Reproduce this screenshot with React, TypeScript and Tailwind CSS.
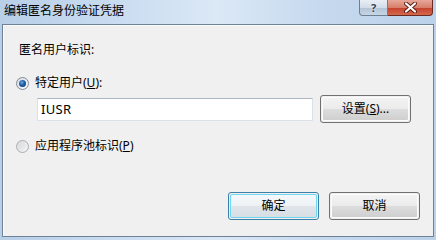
import React from "react";

const font = { fontFamily: '"Noto Sans", "Noto Sans CJK SC", sans-serif' };

function Radio({ checked }: { checked: boolean }) {
  return checked ? (
    <span className="flex h-[13px] w-[13px] shrink-0 items-center justify-center rounded-full border border-[#7f8b98] bg-gradient-to-br from-[#d5dbe2] to-[#fbfcfd]">
      <span className="h-[7px] w-[7px] rounded-full bg-[radial-gradient(circle_at_40%_35%,#6fa7dc_0%,#1c5ea8_45%,#0c3366_100%)]" />
    </span>
  ) : (
    <span className="flex h-[13px] w-[13px] shrink-0 items-center justify-center rounded-full border border-[#a9adb2] bg-gradient-to-br from-[#d8dadc] to-[#f7f7f7]">
      <span className="h-[7px] w-[7px] rounded-full bg-gradient-to-br from-[#dcdcdc] to-[#efefef]" />
    </span>
  );
}

function Btn({ children, def }: { children: React.ReactNode; def?: boolean }) {
  return def ? (
    <div className="flex h-[28px] w-[91px] items-center justify-center rounded-[3px] border border-[#3d7fa6] p-px">
      <div className="flex h-full w-full items-center justify-center rounded-[2px] border border-[#6fd7f2] bg-[linear-gradient(#f6f9fb_0%,#eef1f4_50%,#dfe5e9_51%,#d8dfe4_100%)] text-[12px] text-black">
        {children}
      </div>
    </div>
  ) : (
    <div className="flex h-[28px] w-[91px] items-center justify-center rounded-[3px] border border-[#707070] p-px">
      <div className="flex h-full w-full items-center justify-center rounded-[2px] border border-[#fcfcfc] bg-[linear-gradient(#f3f3f3_0%,#ebebeb_50%,#dddddd_51%,#cfcfcf_100%)] text-[12px] text-black">
        {children}
      </div>
    </div>
  );
}

export default function App() {
  return (
    <div
      className="flex h-[240px] w-[436px] flex-col overflow-hidden bg-[linear-gradient(90deg,#b8cfe8_0%,#c8dbf0_25%,#dbe8f6_50%,#c5d8ee_75%,#bcd2ea_100%)] text-black"
      style={font}
    >
      <div className="flex h-[24px] shrink-0 items-start">
        <div className="pl-[4px] pt-[3px] text-[12px] leading-[16px]">编辑匿名身份验证凭据</div>
        <div className="ml-auto mr-[3px] flex h-[16px]">
          <div className="flex h-[16px] w-[29px] items-center justify-center rounded-bl-[4px] border border-t-0 border-[#6f7f93] bg-[linear-gradient(#e9eef4_0%,#d3dde8_50%,#b4c3d4_51%,#c7d6e6_100%)] text-[11px] font-bold leading-[12px] text-[#2d3f55] [text-shadow:0_0_2px_#ffffff]">
            ?
          </div>
          <div className="flex h-[16px] w-[45px] items-center justify-center rounded-br-[4px] border border-l-0 border-t-0 border-[#6b2b22] bg-[linear-gradient(#e7a799_0%,#d77f6b_50%,#c5402a_51%,#d4684e_100%)]">
            <svg width="13" height="11" viewBox="0 0 13 11">
              <path d="M2 1.5 L11 9.5 M11 1.5 L2 9.5" stroke="#5a1d14" strokeWidth="4" strokeLinecap="round" />
              <path d="M2 1.5 L11 9.5 M11 1.5 L2 9.5" stroke="#ffffff" strokeWidth="2.2" strokeLinecap="round" />
            </svg>
          </div>
        </div>
      </div>
      <div className="mx-[2px] flex h-[213px] shrink-0 flex-col border border-[#6e8196] bg-[#f0f0f0]">
        <div className="flex flex-1 flex-col border-l border-t border-[#fbfbfb] pl-[12px] pt-[16px] text-[12px] leading-[16px]">
          <div className="ml-[3px]">匿名用户标识:</div>
          <div className="mt-[17px] flex items-center gap-[6px]">
            <Radio checked />
            <span>
              特定用户(<span className="underline">U</span>):
            </span>
          </div>
          <div className="mt-[4px] flex items-center">
            <div className="ml-[21px] flex h-[23px] w-[276px] items-center border border-[#dbe1e8] border-t-[#abb7c5] bg-white pl-[3px] text-[13px] tracking-[0.3px]">
              IUSR
            </div>
            <div className="ml-[7px]">
              <Btn>
                设置(<span className="underline">S</span>)...
              </Btn>
            </div>
          </div>
          <div className="mt-[15px] flex items-center gap-[6px]">
            <Radio checked={false} />
            <span>
              应用程序池标识(<span className="underline">P</span>)
            </span>
          </div>
          <div className="mt-auto mb-[16px] mr-[13px] flex justify-end gap-[10px]">
            <Btn def>确定</Btn>
            <Btn>取消</Btn>
          </div>
        </div>
      </div>
    </div>
  );
}
